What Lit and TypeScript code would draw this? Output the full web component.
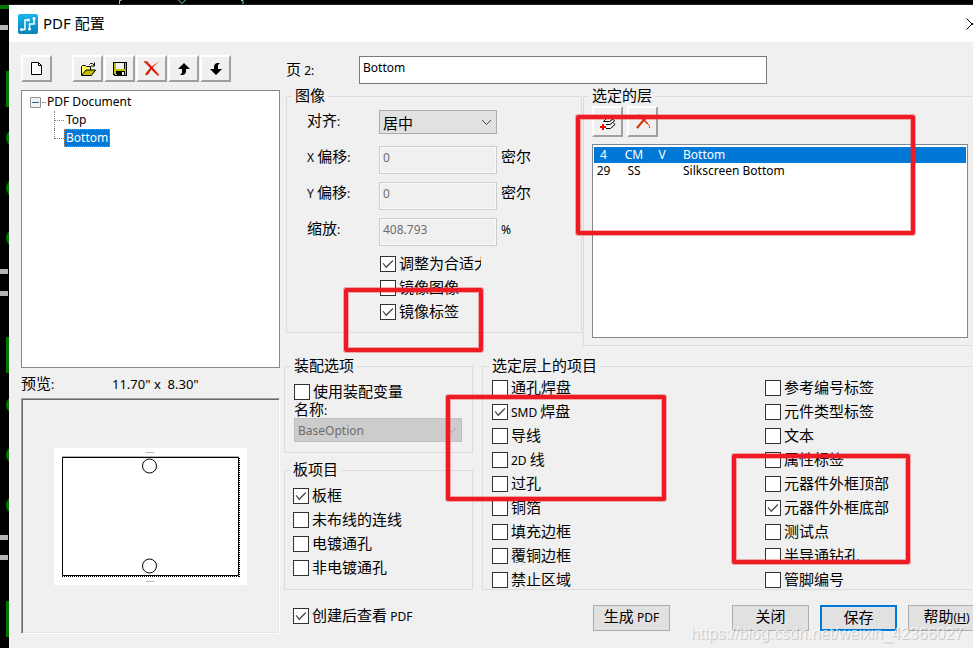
import { LitElement, html, svg, css } from "lit";
import { customElement, property, state } from "lit/decorators.js";

/* Latin runs are set in a smaller UI face than the Chinese text around them. */
const mixed = (text: string) =>
  text
    .split(/([\x20-\x7e]+)/)
    .filter((part) => part !== "")
    .map((part) => (/^[\x20-\x7e]+$/.test(part) ? html`<span class="latin">${part}</span>` : part));

const shared = css`
  * {
    box-sizing: border-box;
  }
  .latin {
    font-family: "Noto Sans", "Open Sans", sans-serif;
    font-size: 12px;
    white-space: pre;
  }
  svg {
    display: block;
  }
`;

const icons: Record<string, unknown> = {
  page: svg`<path d="M2.500 1.500h7l3 3v9h-10z" fill="#fff" stroke="#000"/><path d="M9.500 1.500v3h3" fill="none" stroke="#000"/>`,
  open: svg`<g shape-rendering="crispEdges"><path d="M1 6h1V5h4v1h5v3H6l-4 5H1z" fill="#ffff66"/><path d="M6 9h10l-4 5H2z" fill="#c0c000"/></g>
    <path d="M1.500 14V5.500l1-1h3l1 1h4V9M1.500 14.500h10l4-5.500H6z" fill="none" stroke="#000"/>
    <path d="M9.500 3.500l1-1h2l2 2M14.500 1.500v3.500h-3.500" fill="none" stroke="#000"/>`,
  save: svg`<g shape-rendering="crispEdges"><path d="M1 1h14v14H2l-1-1z" fill="#000"/><path d="M2 2h2v11h1v1H3l-1-1z M13 2h1v12h-1z M4 8h9v2H4z" fill="#c0c000"/>
    <path d="M4 2h8v6H4z" fill="#efefef"/><path d="M10 11h2v3h-2z" fill="#efefef"/></g>`,
  cross: svg`<path d="M0 0.500l3 0 4 4.500 4 4.500 4 4.500-1 .5-4-3.500-4-4.500z" fill="#e01000" stroke="#e01000" stroke-width=".5"/><path d="M15.500 0L9 6 4 13.500l-2.500 1 0-2L7 6z" fill="#e01000"/>
    <path d="M1 .500l3 2.500M2.500 12.500l3-3.500" stroke="#a06000" fill="none"/>`,
  up: svg`<path d="M8 2l6 6h-4v3l-1 2-2 1H4l2-2V8H2z" fill="#000"/>`,
  down: svg`<path d="M8 14L2 8h4V5l1-2 2-1h3l-2 2v4h4z" fill="#000"/>`,
  layers: svg`<path d="M8 1.500h7l-3 3H5zM3.500 7.500h6l5-3.500M3.500 7.500l3-3M6 10.500h4l4.500-3.500-1-1.500M6 14.500h4.500l4.500-4-1.500-1.500" fill="none" stroke="#000"/><path d="M0 13h6M3 10v6" stroke="#f00" stroke-width="2"/>`,
  pick: svg`<path d="M4 1l5 5M12 2L2 14" stroke="#e02000" stroke-width="2"/><path d="M8.500 5.500l4 4" stroke="#e02000" stroke-width="1.500"/><path d="M9 5l-6 8" stroke="#a07000"/><path d="M12 9l3 3.500M14 13.500h1" stroke="#e02000"/>`,
};

@customElement("tool-button")
class ToolButton extends LitElement {
  @property() icon = "page";
  @property() label = "";

  static styles = [
    shared,
    css`
      :host {
        display: block;
        width: 31px;
      }
      button {
        display: grid;
        place-items: center;
        width: 100%;
        height: 100%;
        padding: 0;
        background: #f0f0f0;
        border: 2px solid;
        border-color: #fff #a0a0a0 #a0a0a0 #fff;
      }
    `,
  ];

  render() {
    return html`<button type="button" aria-label=${this.label} title=${this.label}>
      <svg width="16" height="16" viewBox="0 0 16 16">${icons[this.icon]}</svg>
    </button>`;
  }
}

@customElement("tick-box")
class TickBox extends LitElement {
  @property() label = "";
  @property({ type: Boolean }) checked = false;

  static styles = [
    shared,
    css`
      :host {
        display: block;
      }
      label {
        display: flex;
        gap: 3px;
        height: 16px;
        line-height: 14px;
        white-space: nowrap;
      }
      input {
        appearance: none;
        flex: none;
        width: 16px;
        height: 16px;
        margin: 0;
        background: #fff;
        border: 1px solid #333;
      }
      input:checked::before {
        content: "";
        display: block;
        width: 14px;
        height: 14px;
        background: #444;
        clip-path: polygon(11% 47%, 18% 43%, 37% 66%, 82% 21%, 88% 28%, 37% 81%);
      }
    `,
  ];

  render() {
    return html`<label
      ><input type="checkbox" .checked=${this.checked} /><span>${mixed(this.label)}</span></label
    >`;
  }
}

@customElement("app-root")
class AppRoot extends LitElement {
  @state() private layerItems: [string, boolean][][] = [
    [
      ["通孔焊盘", false],
      ["SMD 焊盘", true],
      ["导线", false],
      ["2D 线", false],
      ["过孔", false],
      ["铜箔", false],
      ["填充边框", false],
      ["覆铜边框", false],
      ["禁止区域", false],
    ],
    [
      ["参考编号标签", false],
      ["元件类型标签", false],
      ["文本", false],
      ["属性标签", false],
      ["元器件外框顶部", false],
      ["元器件外框底部", true],
      ["测试点", false],
      ["半导通钻孔", false],
      ["管脚编号", false],
    ],
  ];

  @state() private boardItems: [string, boolean][] = [
    ["板框", true],
    ["未布线的连线", false],
    ["电镀通孔", false],
    ["非电镀通孔", false],
  ];

  static styles = [
    shared,
    css`
      :host {
        display: block;
        position: relative;
        min-height: 100vh;
        padding: 4px 0 0 9px;
        overflow: hidden;
        background: #000;
        color: #000;
        font: 15px "Noto Sans CJK SC", sans-serif;
      }
      .board {
        position: absolute;
        top: 0;
        left: 0;
      }
      .dialog {
        position: relative;
        display: flex;
        flex-direction: column;
        min-height: calc(100vh - 4px);
        margin-right: -22px;
        background: #f0f0f0;
        border-top: 1px solid #222;
      }
      .titlebar {
        display: flex;
        align-items: center;
        gap: 5px;
        height: 37px;
        padding: 0 17px 0 9px;
        background: #fff;
      }
      h1 {
        flex: 1;
        margin: 0;
        font-size: 15px;
        font-weight: 400;
        line-height: 20px;
        padding-bottom: 2px;
      }
      h1 .latin {
        font-size: 15px;
      }
      .close {
        padding: 0;
        background: none;
        border: 0;
      }
      .body {
        display: flex;
        flex: 1;
        gap: 4px;
        padding: 13px 10px 14px 12px;
      }
      .pages {
        display: flex;
        flex: none;
        flex-direction: column;
        width: 259px;
      }
      .toolbar {
        display: flex;
        gap: 1px;
        height: 27px;
        margin-bottom: 8px;
      }
      .toolbar .first {
        margin-right: 19px;
      }
      .tree {
        height: 278px;
        margin: 0;
        padding: 2px 8px;
        list-style: none;
        background: #fff;
        border: 1px solid #828790;
        font: 12px/18px "Noto Sans", sans-serif;
      }
      .root {
        display: flex;
        align-items: center;
      }
      .expander {
        width: 11px;
        height: 11px;
        padding: 0;
        background: linear-gradient(#3c5aa8, #3c5aa8) center / 7px 1px no-repeat, #f4f4f4;
        border: 1px solid #919191;
        border-radius: 1px;
      }
      .stub {
        width: 4px;
        margin: 0 1px;
        border-top: 1px dotted #808080;
      }
      .children {
        margin: 0;
        padding: 0 0 0 24px;
        list-style: none;
      }
      .children li {
        position: relative;
        display: flex;
      }
      .children li::before {
        content: "";
        width: 9px;
        height: 9px;
        border: dotted #808080;
        border-width: 0 0 1px 1px;
      }
      .children li:first-child::after {
        content: "";
        position: absolute;
        top: 9px;
        left: 0;
        height: 9px;
        border-left: 1px dotted #808080;
      }
      .node {
        padding: 0 2px;
        color: inherit;
        text-decoration: none;
      }
      .node.current {
        color: #fff;
        line-height: 16px;
        background: #0078d7;
        border: 1px dotted #e08030;
        padding: 0 1px;
      }
      .paper-size {
        display: grid;
        grid-template-columns: 91px 1fr;
        align-items: center;
        height: 30px;
        line-height: 30px;
      }
      .paper-size .dimensions {
        font-size: 13px;
      }
      .preview {
        display: grid;
        flex: 1;
        place-items: center;
        border: 1px solid;
        border-color: #a0a0a0 #fff #fff #a0a0a0;
        box-shadow: inset 1px 1px #696969, inset -1px -1px #e3e3e3;
      }
      .settings {
        flex: 1;
        min-width: 0;
        padding-top: 1px;
      }
      .page-name {
        display: grid;
        grid-template-columns: 73px minmax(0, 408px);
        padding-left: 2px;
        margin-bottom: 2px;
        line-height: 26px;
      }
      input[type="text"] {
        width: 100%;
        height: 28px;
        padding: 0 3px 5px;
        color: #000;
        background: #fff;
        border: 1px solid #7a7a7a;
        border-radius: 0;
        font: 12px "Noto Sans", sans-serif;
      }
      input[type="text"]:disabled {
        color: #6d6d6d;
        background: #f0f0f0;
        border-color: #ccc;
        box-shadow: inset 0 0 0 1px #fafafa;
      }
      .upper {
        display: grid;
        grid-template-columns: 296px 1fr;
        gap: 1px;
        align-items: start;
        padding-left: 2px;
        margin-bottom: 10px;
      }
      .lower {
        display: grid;
        grid-template-columns: 189px 1fr;
        gap: 9px;
      }
      fieldset {
        min-width: 0;
        margin: 0;
        padding: 4px 10px 12px 8px;
        border: 1px solid #dcdcdc;
      }
      legend {
        height: 20px;
        margin-left: -3px;
        padding: 0 3px;
        line-height: 18px;
      }
      .form {
        display: grid;
        grid-template-columns: 72px 118px 1fr;
        grid-auto-rows: 28px;
        row-gap: 8px;
        padding-left: 12px;
        line-height: 20px;
      }
      .unit {
        padding-left: 4px;
      }
      .select {
        display: grid;
        height: 24px;
        align-items: center;
      }
      .select > * {
        grid-area: 1 / 1;
      }
      .select svg {
        justify-self: end;
        margin-right: 5px;
        pointer-events: none;
      }
      select {
        appearance: none;
        width: 100%;
        height: 24px;
        padding: 0 3px;
        color: #000;
        background: #e1e1e1;
        border: 1px solid #adadad;
        border-radius: 0;
        font: 15px "Noto Sans CJK SC", sans-serif;
      }
      select:disabled {
        color: #6d6d6d;
        background: #ccc;
        border-color: #bfbfbf;
        opacity: 1;
        font: 12px "Noto Sans", sans-serif;
      }
      .ticks {
        display: flex;
        flex-direction: column;
        gap: 8px;
      }
      .mirror {
        width: 101px;
        margin: 10px 0 0 85px;
        overflow-x: clip;
      }
      .layers {
        padding: 0 16px 7px 8px;
      }
      .layer-tools {
        display: flex;
        gap: 4px;
        height: 31px;
        margin-bottom: 7px;
      }
      .layer-list {
        height: 194px;
        padding: 2px 1px;
        background: #fff;
        border: 1px solid #828790;
      }
      table {
        width: 100%;
        border-collapse: collapse;
        table-layout: fixed;
        font: 12px/16px "Noto Sans", sans-serif;
      }
      td {
        height: 16px;
        padding: 0;
        text-align: center;
      }
      td:last-child {
        text-align: left;
      }
      .num {
        width: 19px;
      }
      .code {
        width: 42px;
      }
      .side {
        width: 14px;
      }
      .layer {
        padding-left: 14px;
      }
      tr.selected {
        color: #fff;
        background: #0078d7;
      }
      .stack {
        display: flex;
        flex-direction: column;
        gap: 7px;
      }
      .assembly {
        padding: 8px 10px 10px 9px;
      }
      .assembly .name {
        display: block;
        height: 18px;
        line-height: 18px;
      }
      .boards {
        flex: 1;
        padding-top: 8px;
      }
      .items {
        display: grid;
        grid-template-columns: 273px 1fr;
        padding: 4px 9px 1px;
      }
      .footer {
        display: flex;
        margin-top: 15px;
        padding-left: 9px;
      }
      .footer tick-box {
        flex: 1;
        padding-top: 3px;
      }
      .actions {
        display: flex;
        gap: 11px;
      }
      .actions .generate {
        margin-right: 51px;
      }
      .push {
        width: 77px;
        height: 26px;
        padding: 0 0 4px;
        color: #000;
        white-space: nowrap;
        background: #e1e1e1;
        border: 1px solid #adadad;
        font: 15px/20px "Noto Sans CJK SC", sans-serif;
      }
      .push.primary {
        padding: 0 0 2px;
        border: 2px solid #0078d7;
      }
      .mark {
        position: absolute;
        border: 4px solid #ed1c24;
        border-radius: 2px;
        box-shadow: 0 0 0 1px rgba(237, 28, 36, 0.35), inset 0 0 0 1px rgba(237, 28, 36, 0.35);
        pointer-events: none;
      }
      .mark-layers {
        left: 576px;
        top: 115px;
        width: 339px;
        height: 120px;
      }
      .mark-mirror {
        left: 344px;
        top: 288px;
        width: 139px;
        height: 64px;
      }
      .mark-pads {
        left: 446px;
        top: 395px;
        width: 220px;
        height: 106px;
      }
      .mark-outline {
        left: 732px;
        top: 454px;
        width: 178px;
        height: 110px;
      }
      .watermark {
        position: absolute;
        right: 10px;
        bottom: 8px;
        color: rgba(255, 255, 255, 0.7);
        font: 16px/20px "Liberation Sans", sans-serif;
        text-shadow: 1px 1px 1px rgba(0, 0, 0, 0.2);
        pointer-events: none;
      }
    `,
  ];

  private ticks(items: [string, boolean][]) {
    return html`<div class="ticks">
      ${items.map(([label, on]) => html`<tick-box label=${label} ?checked=${on}></tick-box>`)}
    </div>`;
  }

  private chevron(color: string) {
    return html`<svg width="11" height="7" viewBox="0 0 11 7">
      <path d="M1 1l4.500 4.500L10 1" fill="none" stroke=${color} />
    </svg>`;
  }

  private boardBackdrop() {
    return html`<svg class="board" width="260" height="648" viewBox="0 0 260 648" aria-hidden="true">
      <path
        d="M0 5h9v4H0zM6 71h3v36H6zM6 337h3v36H6zM6 601h3v36H6z"
        fill="#007800"
      />
      ${[138, 188, 238, 405, 455, 505].map((y) => svg`<circle cx="15" cy=${y} r="9" fill="#007800"/>`)}
      <path d="M0 25h8v5H0zM0 269h8v5H0zM0 291h8v5H0zM0 535h8v5H0zM0 555h8v5H0z" fill="#b4b4b4" />
      <path d="M121.500 .500h-2V5M241 .500h2V5M178.500 0l3.500 3.500L185.500 0" fill="none" stroke="#7fd4d4" />
    </svg>`;
  }

  private renderPages() {
    return html`<section class="pages">
      <div class="toolbar">
        <tool-button class="first" icon="page" label="新建"></tool-button>
        <tool-button icon="open" label="打开"></tool-button>
        <tool-button icon="save" label="保存"></tool-button>
        <tool-button icon="cross" label="删除"></tool-button>
        <tool-button icon="up" label="上移"></tool-button>
        <tool-button icon="down" label="下移"></tool-button>
      </div>
      <ul class="tree">
        <li>
          <div class="root">
            <button class="expander" type="button" aria-label="折叠"></button><span class="stub"></span>PDF Document
          </div>
          <ul class="children">
            <li><a class="node" href="#top">Top</a></li>
            <li><a class="node current" href="#bottom">Bottom</a></li>
          </ul>
        </li>
      </ul>
      <div class="paper-size">
        <span>${mixed("预览:")}</span><span class="latin dimensions">11.70" x  8.30"</span>
      </div>
      <div class="preview">
        <svg width="193" height="137" viewBox="0 0 193 137" role="img" aria-label="预览">
          <path d="M0 0h193v137H0z" fill="#fff" />
          <path d="M92 4.500h8M92 133.500h8M8 8.500h177" stroke="#b4b4b4" />
          <path d="M8.500 9.500h176v118H8.500z" fill="none" stroke="#000" />
          <path d="M185.500 10v119M8 128.500h177" stroke="#000" stroke-dasharray="1 1" />
          <g fill="none" stroke="#000">
            <circle cx="95.500" cy="18" r="7" />
            <circle cx="95.500" cy="118" r="7" />
          </g>
        </svg>
      </div>
    </section>`;
  }

  private offset(id: string, label: string, value: string, unit: string) {
    return html`<label for=${id}>${mixed(label)}</label>
      <input id=${id} type="text" .value=${value} disabled />
      <span class="unit">${mixed(unit)}</span>`;
  }

  private renderSettings() {
    return html`<section class="settings">
      <div class="page-name">
        <label for="page">${mixed("页 2:")}</label>
        <input id="page" type="text" value="Bottom" />
      </div>
      <div class="upper">
        <fieldset>
          <legend>图像</legend>
          <div class="form">
            <label for="align">${mixed("对齐:")}</label>
            <div class="select">
              <select id="align">
                <option>居中</option>
              </select>
              ${this.chevron("#444")}
            </div>
            <span></span>
            ${this.offset("dx", "X 偏移:", "0", "密尔")} ${this.offset("dy", "Y 偏移:", "0", "密尔")}
            ${this.offset("zoom", "缩放:", "408.793", "%")}
          </div>
          <div class="mirror">
            ${this.ticks([
              ["调整为合适大小", true],
              ["镜像图像", false],
              ["镜像标签", true],
            ])}
          </div>
        </fieldset>
        <fieldset class="layers">
          <legend>选定的层</legend>
          <div class="layer-tools">
            <tool-button icon="layers" label="添加层"></tool-button>
            <tool-button icon="pick" label="移除层"></tool-button>
          </div>
          <div class="layer-list">
            <table>
              <tbody>
                <tr class="selected">
                  <td class="num">4</td>
                  <td class="code">CM</td>
                  <td class="side">V</td>
                  <td class="layer">Bottom</td>
                </tr>
                <tr>
                  <td>29</td>
                  <td>SS</td>
                  <td></td>
                  <td class="layer">Silkscreen Bottom</td>
                </tr>
              </tbody>
            </table>
          </div>
        </fieldset>
      </div>
      <div class="lower">
        <div class="stack">
          <fieldset class="assembly">
            <legend>装配选项</legend>
            <tick-box label="使用装配变量"></tick-box>
            <label class="name" for="variant">${mixed("名称:")}</label>
            <div class="select">
              <select id="variant" disabled>
                <option>BaseOption</option>
              </select>
              ${this.chevron("#a0a0a0")}
            </div>
          </fieldset>
          <fieldset class="boards">
            <legend>板项目</legend>
            ${this.ticks(this.boardItems)}
          </fieldset>
        </div>
        <fieldset class="items">
          <legend>选定层上的项目</legend>
          ${this.layerItems.map((column) => this.ticks(column))}
        </fieldset>
      </div>
      <div class="footer">
        <tick-box label="创建后查看 PDF" checked></tick-box>
        <div class="actions">
          <button class="push generate" type="button">${mixed("生成 PDF")}</button>
          <button class="push" type="button">关闭</button>
          <button class="push primary" type="button">保存</button>
          <button class="push" type="button">帮助<span class="latin">(<u>H</u>)</span></button>
        </div>
      </div>
    </section>`;
  }

  render() {
    return html`${this.boardBackdrop()}
      <main class="dialog">
        <header class="titlebar">
          <svg width="20" height="20" viewBox="0 0 20 20" aria-hidden="true">
            <defs>
              <linearGradient id="logo" x1="0" y1="0" x2="0" y2="1">
                <stop offset="0" stop-color="#18b4ee" />
                <stop offset="1" stop-color="#0784b8" />
              </linearGradient>
            </defs>
            <rect width="20" height="20" rx="2" fill="url(#logo)" />
            <path
              d="M3.500 15.500H7V6h3.500M11.500 15v-5H16V4.500"
              fill="none"
              stroke="#fff"
              stroke-width="1.500"
            />
            <g fill="#fff">
              <circle cx="3.500" cy="15.500" r="1.500" />
              <circle cx="10.500" cy="6" r="1.500" />
              <circle cx="11.500" cy="15" r="1.500" />
              <circle cx="16" cy="4.500" r="1.500" />
            </g>
          </svg>
          <h1>${mixed("PDF 配置")}</h1>
          <button class="close" type="button" aria-label="关闭">
            <svg width="12" height="12" viewBox="0 0 12 12">
              <path d="M.500 .500l11 11M11.500 .500l-11 11" stroke="#000" />
            </svg>
          </button>
        </header>
        <div class="body">${this.renderPages()}${this.renderSettings()}</div>
      </main>
      <div class="mark mark-layers"></div>
      <div class="mark mark-mirror"></div>
      <div class="mark mark-pads"></div>
      <div class="mark mark-outline"></div>
      <div class="watermark">https://blog.csdn.net/weixin_42366027</div>`;
  }
}
